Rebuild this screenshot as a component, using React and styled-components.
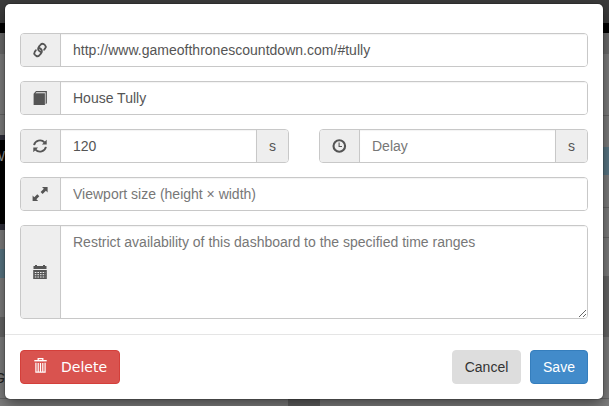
import React from "react";
import styled, { createGlobalStyle, css } from "styled-components";

const GlobalStyle = createGlobalStyle`
  * { box-sizing: border-box; }
  html, body { margin: 0; height: 100%; overflow: hidden; background: #666; }
  body, input, textarea, button {
    font-family: "Liberation Sans", Arial, sans-serif;
    font-size: 14px;
    line-height: 20px;
  }
`;

const Screen = styled.div`
  position: relative;
  width: 609px;
  height: 406px;
  overflow: hidden;
  background: #7a7a7a;
`;

const Backdrop = styled.div`
  display: grid;
  grid-template-columns: 288px 32px 289px;
  height: 100%;
`;

const Column = styled.div`
  display: flex;
  flex-direction: column;
  overflow: hidden;
`;

const Band = styled.div`
  flex: none;
  height: ${(p) => p.$h}px;
  background: ${(p) => p.$c};
  border-bottom: ${(p) => (p.$line ? "1px solid #686868" : "0")};
  color: ${(p) => p.$ink || "#222"};
  padding-top: ${(p) => p.$top || 0}px;
  text-indent: ${(p) => p.$indent || 0}px;
  font-style: ${(p) => (p.$italic ? "italic" : "normal")};
  white-space: nowrap;
`;

const Modal = styled.form`
  position: absolute;
  left: 5px;
  top: 4px;
  width: 598px;
  height: 395px;
  display: flex;
  flex-direction: column;
  background: #fff;
  border-radius: 5px;
  box-shadow: 0 0 0 1px rgba(0, 0, 0, 0.15), 0 5px 15px rgba(0, 0, 0, 0.5);
`;

const Body = styled.div`
  flex: 1;
  display: flex;
  flex-direction: column;
  gap: 14px;
  padding: 29px 15px 0;
`;

const Pair = styled.div`
  display: grid;
  grid-template-columns: 269px 269px;
  justify-content: space-between;
`;

const Group = styled.label`
  display: flex;
  height: ${(p) => (p.$tall ? 94 : 34)}px;
  border: 1px solid #c8c8c8;
  border-radius: 4px;
  overflow: hidden;
  background: #fff;
`;

const Addon = styled.span`
  flex: none;
  display: flex;
  align-items: center;
  justify-content: center;
  background: #eee;
  color: #555;
  width: ${(p) => (p.$end ? 32 : 40)}px;
  padding-right: ${(p) => (p.$end ? 0 : 1)}px;
  ${(p) => (p.$end ? "border-left" : "border-right")}: 1px solid #c8c8c8;
`;

const field = css`
  flex: 1;
  min-width: 0;
  margin: 0;
  padding: 6px 12px;
  border: 0;
  outline: 0;
  color: #555;
  background: #fff;
  box-shadow: inset 0 1px 1px rgba(0, 0, 0, 0.05);
  &::placeholder { color: #777; opacity: 1; }
`;

const Input = styled.input`${field}`;
const UrlInput = styled(Input)`letter-spacing: 0.015px;`;
const TextArea = styled.textarea`${field} resize: vertical;`;

const Footer = styled.div`
  height: 65px;
  display: flex;
  align-items: flex-start;
  gap: 9px;
  padding: 15px 15px 0;
  border-top: 1px solid #e5e5e5;
`;

const Button = styled.button`
  height: 34px;
  width: ${(p) => p.$w}px;
  padding: 0;
  border: 1px solid ${(p) => p.$edge};
  border-radius: 4px;
  background: ${(p) => p.$bg};
  color: ${(p) => p.$ink || "#fff"};
`;

const DeleteButton = styled(Button)`
  display: flex;
  align-items: center;
  gap: 13px;
  padding-left: 13px;
  margin-right: auto;
  font-family: "DejaVu Sans", sans-serif;
  svg { margin-top: -3px; }
`;

const Svg = styled.svg`
  flex: none;
  display: block;
  overflow: visible;
`;

const Icon = ({ children, h = 14 }) => (
  <Svg width="14" height={h} viewBox={`0 0 14 ${h}`} fill="none" stroke="currentColor">
    {children}
  </Svg>
);

const LinkIcon = () => (
  <Icon>
    <g strokeWidth="1.8" strokeLinecap="round" strokeLinejoin="round">
      <path d="M8 9.1Q5 7.9 5.1 5.6Q5.2 4.6 5.9 3.7L7.8 1.5Q9.2.2 10.8 1.1L12 2.1Q13.4 3.5 12.3 5.1L11.1 6.7" />
      <path d="M6 4.9Q9 6.1 8.9 8.4Q8.8 9.4 8.1 10.3L6.2 12.5Q4.8 13.8 3.2 12.9L2 11.9Q.6 10.5 1.7 8.9L2.9 7.3" />
    </g>
  </Icon>
);

const BookIcon = () => (
  <Icon>
    <path fill="currentColor" stroke="none" d="M.6 2.8 3 0H13.9V12.2L12.6 13.2V1.2H3.4L2.4 2.2H11.9V14H.6Z" />
  </Icon>
);

const RefreshIcon = () => (
  <Icon>
    <g strokeWidth="1.9">
      <path d="M1.1 6.1A6 5.7 0 0 1 11.5 3.3" />
      <path d="M12.9 7.9A6 5.7 0 0 1 2.5 10.7" />
    </g>
    <path fill="currentColor" stroke="none" d="M13.7.7V5.5H8.9ZM.3 13.3V8.5H5.1Z" />
  </Icon>
);

const ExpandIcon = () => (
  <Icon>
    <path fill="currentColor" stroke="none" d="M9 0H14.6V5.4L12.9 3.8 9.6 7 7.6 5 10.8 1.7ZM5.2 14H-.4V8.6L1.3 10.2 4.3 7.3 6.3 9.3 3.4 12.3Z" />
  </Icon>
);

const ClockIcon = () => (
  <Icon>
    <circle cx="7.3" cy="7" r="5.8" strokeWidth="2.1" />
    <path d="M7.1 3.4V7.5H10" strokeWidth="1.1" />
  </Icon>
);

const CalendarIcon = () => (
  <Icon>
    <path fill="currentColor" stroke="none" d="M2 0H4V1H10V0H12V1H13.5V4H.5V1H2Z" />
    <path fill="currentColor" stroke="none" d="M.2 5H13.8V14H.2Z" />
    <path stroke="#eee" strokeWidth="1" strokeDasharray="1.6 1" d="M1.8 7.5H12.4M1.8 9.7H12.4M1.8 12H12.4" />
  </Icon>
);

const TrashIcon = () => (
  <Icon h={15}>
    <g transform="translate(-.5 0)">
      <path d="M4.7 2V.7H9.3V2" strokeWidth="1.3" />
      <path d="M.8 2.7H13.2" strokeWidth="1.4" />
      <path d="M2.4 4.8V14.2H11.6V4.8M4.7 5V14M7 5V14M9.3 5V14" strokeWidth="1.2" />
    </g>
  </Icon>
);

export default function App() {
  return (
    <>
      <GlobalStyle />
      <Screen>
        <Backdrop>
          <Column>
            <Band $h={23} $c="#3c3c3c" />
            <Band $h={10} $c="#000" />
            <Band $h={21} $c="#6e6e6e" />
            <Band $h={61} $c="#808080" $line />
            <Band $h={20} $c="#808080" />
            <Band $h={5} $c="#30303c" />
            <Band $h={84} $c="#000" $ink="#999" $top={6} $indent={-8}>W</Band>
            <Band $h={6} $c="#30303c" />
            <Band $h={19} $c="#808080" />
            <Band $h={29} $c="#5b7987" />
            <Band $h={39} $c="#808080" />
            <Band $h={20} $c="#686868" />
            <Band $h={62} $c="#808080" $line $top={31} $indent={-6} $italic>Ga</Band>
            <Band $h={7} $c="#808080" />
          </Column>
          <Column>
            <Band $h={23} $c="#3c3c3c" />
            <Band $h={383} $c="#626262" />
          </Column>
          <Column>
            <Band $h={23} $c="#3c3c3c" />
            <Band $h={10} $c="#000" />
            <Band $h={21} $c="#6e6e6e" />
            <Band $h={62} $c="#808080" $line />
            <Band $h={31} $c="#808080" />
            <Band $h={28} $c="#5b7987" />
            <Band $h={33} $c="#808080" $line />
            <Band $h={30} $c="#808080" $line />
            <Band $h={38} $c="#808080" />
            <Band $h={61} $c="#686868" />
            <Band $h={62} $c="#808080" $line />
            <Band $h={7} $c="#808080" />
          </Column>
        </Backdrop>
        <Modal>
          <Body>
            <Group>
              <Addon><LinkIcon /></Addon>
              <UrlInput defaultValue="http://www.gameofthronescountdown.com/#tully" />
            </Group>
            <Group>
              <Addon><BookIcon /></Addon>
              <Input defaultValue="House Tully" />
            </Group>
            <Pair>
              <Group>
                <Addon><RefreshIcon /></Addon>
                <Input defaultValue="120" />
                <Addon $end>s</Addon>
              </Group>
              <Group>
                <Addon><ClockIcon /></Addon>
                <Input placeholder="Delay" />
                <Addon $end>s</Addon>
              </Group>
            </Pair>
            <Group>
              <Addon><ExpandIcon /></Addon>
              <Input placeholder="Viewport size (height × width)" />
            </Group>
            <Group $tall>
              <Addon><CalendarIcon /></Addon>
              <TextArea placeholder="Restrict availability of this dashboard to the specified time ranges" />
            </Group>
          </Body>
          <Footer>
            <DeleteButton type="button" $w={100} $bg="#d9534f" $edge="#d43f3a">
              <TrashIcon />
              Delete
            </DeleteButton>
            <Button type="button" $w={69} $bg="#ddd" $edge="#ddd" $ink="#333">Cancel</Button>
            <Button type="button" $w={58} $bg="#428bca" $edge="#357ebd">Save</Button>
          </Footer>
        </Modal>
      </Screen>
    </>
  );
}
